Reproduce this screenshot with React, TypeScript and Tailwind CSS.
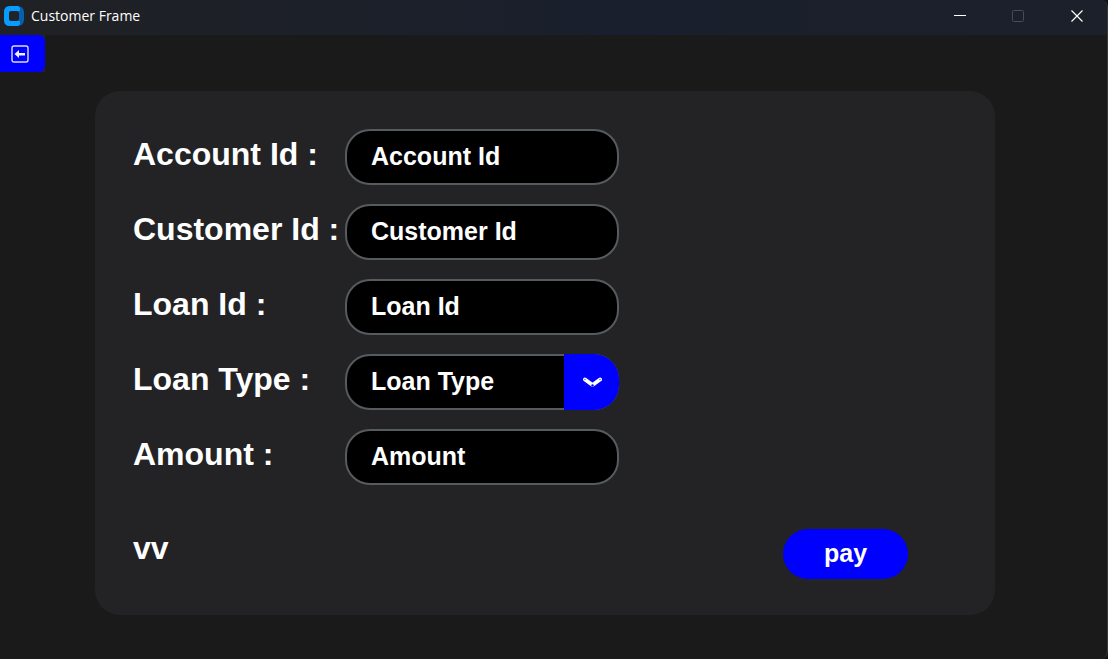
import { useState } from "react";
import type { ReactNode } from "react";

const fieldClass =
  "h-14 w-full appearance-none rounded-[25px] border-2 border-[#565b5e] bg-black px-6 text-[25px] font-bold text-white outline-none placeholder:text-white placeholder:opacity-100";

function Row({ id, label, children }: { id: string; label: string; children: ReactNode }) {
  return (
    <div className="flex items-center">
      <label htmlFor={id} className="w-[212px] shrink-0 pb-1.5 text-[32px] leading-9 font-bold whitespace-nowrap">
        {label}
      </label>
      <div className="relative w-[274px]">{children}</div>
    </div>
  );
}

function TextRow({ id, label, placeholder }: { id: string; label: string; placeholder: string }) {
  return (
    <Row id={id} label={label}>
      <input id={id} type="text" placeholder={placeholder} className={`${fieldClass} pb-0.5`} />
    </Row>
  );
}

function TitleBar() {
  return (
    <header className="flex h-[35px] items-center justify-between rounded-tr-lg bg-linear-to-r from-[#1f2124] via-[#1a1f2d] via-55% to-[#1c202b]">
      <div className="flex items-center gap-[7px] pl-1 pb-[3px]">
        <svg width="20" height="20" viewBox="0 0 20 20" aria-hidden="true">
          <rect width="20" height="20" rx="6" fill="#0560ae" />
          <path d="M6 0H14L16 2V4L14.5 6V14L16 16V18L14 20H6Q0 20 0 14V6Q0 0 6 0Z" fill="#0a9bff" />
          <rect x="5" y="5" width="10" height="10" rx="2" fill="#202327" />
        </svg>
        <h1 className="font-['Open_Sans','Noto_Sans',sans-serif] text-[14px] leading-5 text-white">Customer Frame</h1>
      </div>
      <div className="flex h-full">
        <button type="button" aria-label="Minimize" className="flex w-[58px] justify-center pt-[9px]">
          <svg width="14" height="14" viewBox="0 0 14 14"><path d="M1 6.5H13" stroke="#fff" /></svg>
        </button>
        <button type="button" aria-label="Maximize" disabled className="flex w-[58px] justify-center pt-[9px]">
          <svg width="14" height="14" viewBox="0 0 14 14"><rect x="1.5" y="1.5" width="11" height="11" rx="1" fill="none" stroke="#484b56" /></svg>
        </button>
        <button type="button" aria-label="Close" className="flex w-[60px] justify-center pt-[9px]">
          <svg width="14" height="14" viewBox="0 0 14 14"><path d="M1.5 1.5L12.5 12.5M12.5 1.5L1.5 12.5" stroke="#fff" strokeWidth="1.2" /></svg>
        </button>
      </div>
    </header>
  );
}

export default function App() {
  const [loanType, setLoanType] = useState("Loan Type");

  return (
    <div className="bg-[#141414]">
      <div className="flex min-h-screen flex-col rounded-r-lg border-r border-[#3a3a3a] bg-[#1a1a1a] font-['Liberation_Sans',Arial,sans-serif] text-white">
        <TitleBar />
        <div className="w-[45px] bg-[#232325]">
          <button type="button" aria-label="Back" className="flex h-[37px] w-full items-center rounded-r-md bg-[#0000ff] pl-[11px]">
            <svg width="18" height="18" viewBox="0 0 18 18" fill="none">
              <rect x="1" y="1" width="16" height="16" rx="2" stroke="#dcdcff" strokeWidth="1.4" />
              <path d="M3.5 9L8 5V8H14V10.5H8V13Z" fill="#f0f0ff" />
            </svg>
          </button>
        </div>
        <main className="pt-[19px] pr-28 pb-11 pl-[95px]">
          <form className="rounded-[25px] bg-[#232325] pt-[38px] pr-[87px] pb-9 pl-[38px]" onSubmit={(e) => e.preventDefault()}>
            <div className="flex flex-col gap-[19px]">
              <TextRow id="account" label="Account Id :" placeholder="Account Id" />
              <TextRow id="customer" label="Customer Id :" placeholder="Customer Id" />
              <TextRow id="loan" label="Loan Id :" placeholder="Loan Id" />
              <Row id="loan-type" label="Loan Type :">
                <select id="loan-type" value={loanType} onChange={(e) => setLoanType(e.target.value)} className={fieldClass}>
                  <option>Loan Type</option>
                </select>
                <span className="pointer-events-none absolute inset-y-0 right-0 flex w-[55px] items-center justify-center rounded-r-[25px] bg-[#0000ff]">
                  <svg width="20" height="12" viewBox="0 0 20 12" fill="none" aria-hidden="true">
                    <path d="M3 3.5L10.5 9L18 3.5" stroke="#fff" strokeWidth="4" strokeLinecap="round" strokeLinejoin="round" />
                    <circle cx="3" cy="3.5" r="0.6" fill="#0000ff" />
                    <circle cx="18" cy="3.5" r="0.6" fill="#0000ff" />
                    <circle cx="10.5" cy="9.5" r="1.2" fill="#0000ff" />
                  </svg>
                </span>
              </Row>
              <TextRow id="amount" label="Amount :" placeholder="Amount" />
            </div>
            <div className="mt-11 flex items-center justify-between">
              <p className="pb-3 text-[32px] leading-9 font-bold">vv</p>
              <button type="submit" className="h-[50px] w-[125px] rounded-[25px] bg-[#0000ff] text-[25px] font-bold">
                pay
              </button>
            </div>
          </form>
        </main>
      </div>
    </div>
  );
}
